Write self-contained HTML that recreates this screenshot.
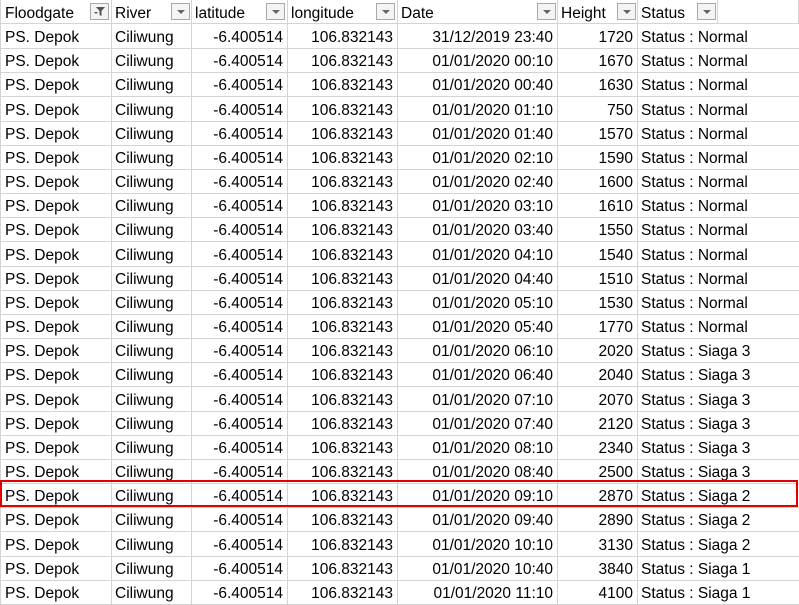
<!DOCTYPE html>
<html><head><meta charset="utf-8"><style>
body{margin:0;width:799px;height:604px;overflow:hidden;background:#fff;font-family:"Liberation Sans",sans-serif;font-size:15.5px;color:#000;position:relative}
.r{position:absolute;left:0;width:799px;height:24px;border-bottom:1px solid #d4d4d4;box-sizing:border-box}
.c{position:absolute;top:0;height:100%;border-right:1px solid #d4d4d4;box-sizing:border-box;line-height:23px;padding:2px 4px 0;white-space:nowrap;overflow:hidden}
.rt{text-align:right}
.b{position:absolute;top:3px;width:19px;height:17px;border:1px solid #a8a8a8;box-sizing:border-box;background:#f4f4f4}
.b:after{content:"";position:absolute;left:5px;top:6px;border-left:4px solid transparent;border-right:4px solid transparent;border-top:4px solid #666}
.f:after{display:none}
</style></head><body>
<div class="r" style="top:0;height:24px">
<div class="c" style="left:0;width:112px;border-left:1px solid #d4d4d4">Floodgate</div><div class="b f" style="left:90px"><svg width="17" height="15" style="position:absolute;left:0;top:0"><path d="M5 3h9l-3.5 4v5l-2-1v-4z" fill="#555"/><path d="M3 8h4l-2 2z" fill="#555"/></svg></div>
<div class="c" style="left:111px;width:81px">River</div><div class="b" style="left:171px"></div>
<div class="c" style="left:191px;width:97px">latitude</div><div class="b" style="left:266px"></div>
<div class="c" style="left:287px;width:111px">longitude</div><div class="b" style="left:376px"></div>
<div class="c" style="left:397px;width:161px">Date</div><div class="b" style="left:537px"></div>
<div class="c" style="left:557px;width:81px">Height</div><div class="b" style="left:617px"></div>
<div class="c" style="left:637px;width:81px">Status</div><div class="b" style="left:697px"></div>
<div class="c" style="left:717px;width:82px"></div>
</div>
<div id="rows"></div>
<script>
var d=[["31/12/2019 23:40",1720,"Normal"],["01/01/2020 00:10",1670,"Normal"],["01/01/2020 00:40",1630,"Normal"],["01/01/2020 01:10",750,"Normal"],["01/01/2020 01:40",1570,"Normal"],["01/01/2020 02:10",1590,"Normal"],["01/01/2020 02:40",1600,"Normal"],["01/01/2020 03:10",1610,"Normal"],["01/01/2020 03:40",1550,"Normal"],["01/01/2020 04:10",1540,"Normal"],["01/01/2020 04:40",1510,"Normal"],["01/01/2020 05:10",1530,"Normal"],["01/01/2020 05:40",1770,"Normal"],["01/01/2020 06:10",2020,"Siaga 3"],["01/01/2020 06:40",2040,"Siaga 3"],["01/01/2020 07:10",2070,"Siaga 3"],["01/01/2020 07:40",2120,"Siaga 3"],["01/01/2020 08:10",2340,"Siaga 3"],["01/01/2020 08:40",2500,"Siaga 3"],["01/01/2020 09:10",2870,"Siaga 2"],["01/01/2020 09:40",2890,"Siaga 2"],["01/01/2020 10:10",3130,"Siaga 2"],["01/01/2020 10:40",3840,"Siaga 1"],["01/01/2020 11:10",4100,"Siaga 1"]];
var h="";
d.forEach(function(r,i){var t=Math.round(24+i*24.17);
h+='<div class="r" style="top:'+t+'px;height:25px">'+
'<div class="c" style="left:0;width:112px;border-left:1px solid #d4d4d4">PS. Depok</div>'+
'<div class="c" style="left:111px;width:81px">Ciliwung</div>'+
'<div class="c rt" style="left:191px;width:97px">-6.400514</div>'+
'<div class="c rt" style="left:287px;width:111px">106.832143</div>'+
'<div class="c rt" style="left:397px;width:161px">'+r[0]+'</div>'+
'<div class="c rt" style="left:557px;width:81px">'+r[1]+'</div>'+
'<div class="c" style="left:637px;width:162px;border-right:none">Status : '+r[2]+'</div></div>';});
h+='<div style="position:absolute;left:0;top:480px;width:798px;height:27px;border:2px solid #e00000;box-sizing:border-box"></div>';
document.getElementById("rows").innerHTML=h;
</script>
</body></html>
